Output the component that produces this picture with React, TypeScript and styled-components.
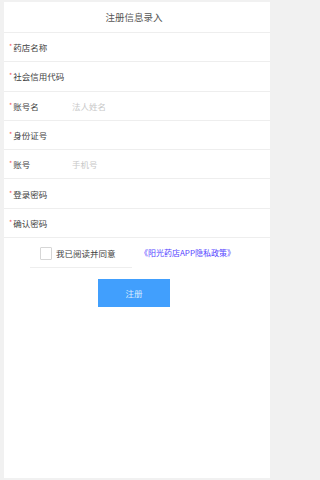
import React from "react";
import styled, { createGlobalStyle } from "styled-components";

const Global = createGlobalStyle`
  html, body { margin: 0; padding: 0; background: #f1f1f1; }
  body { font-family: "Noto Sans CJK SC", "Liberation Sans", sans-serif; }
  * { box-sizing: border-box; }
`;

const Panel = styled.div`
  margin: 2px 0 2px 4px;
  width: 266px;
  height: 476px;
  background: #ffffff;
  display: flex;
  flex-direction: column;
`;

const Header = styled.div`
  height: 31px;
  border-bottom: 1px solid #eeeeee;
  display: flex;
  align-items: center;
  justify-content: center;
  font-size: 9.5px;
  color: #555555;
  padding-right: 6px;
`;

const Row = styled.div`
  height: 29.3px;
  border-bottom: 1px solid #eeeeee;
  display: flex;
  align-items: center;
  padding-left: 5px;
`;

const Label = styled.div`
  width: 63px;
  display: flex;
  align-items: center;
  font-size: 8.5px;
  color: #3f3f3f;
`;

const Star = styled.span`
  color: #f25a5a;
  font-size: 7px;
  margin-right: 1px;
  position: relative;
  top: -1px;
`;

const Input = styled.input`
  flex: 1;
  min-width: 0;
  border: none;
  outline: none;
  padding: 0;
  background: transparent;
  font-family: inherit;
  font-size: 8.5px;
  color: #444;
  &::placeholder { color: #c8c8c8; }
`;

const AgreeRow = styled.div`
  display: flex;
  align-items: flex-start;
  padding-left: 26px;
`;

const AgreeBox = styled.label`
  width: 102px;
  height: 30px;
  border-bottom: 1px solid #eeeeee;
  display: flex;
  align-items: center;
  padding-left: 10px;
  padding-top: 1px;
  font-size: 8.5px;
  color: #3f3f3f;
`;

const Check = styled.span`
  width: 12px;
  height: 13px;
  border: 1px solid #d6d6d6;
  border-radius: 1px;
  margin-right: 4px;
  flex: none;
`;

const Policy = styled.a`
  margin-left: 8px;
  height: 28px;
  display: flex;
  align-items: center;
  font-size: 8px;
  color: #5544ff;
  text-decoration: none;
`;

const ButtonWrap = styled.div`
  padding-left: 94px;
  margin-top: 10px;
`;

const Submit = styled.button`
  width: 72px;
  height: 28px;
  border: none;
  background: #419ffd;
  color: rgba(255, 255, 255, 0.82);
  font-family: inherit;
  font-size: 8.5px;
  padding: 0;
`;

const fields: { label: string; placeholder?: string; type?: string }[] = [
  { label: "药店名称" },
  { label: "社会信用代码" },
  { label: "账号名", placeholder: "法人姓名" },
  { label: "身份证号" },
  { label: "账号", placeholder: "手机号" },
  { label: "登录密码", type: "password" },
  { label: "确认密码", type: "password" },
];

export default function App() {
  return (
    <>
      <Global />
      <Panel>
        <Header>注册信息录入</Header>
        {fields.map((f) => (
          <Row key={f.label}>
            <Label>
              <Star>*</Star>
              {f.label}
            </Label>
            <Input type={f.type || "text"} placeholder={f.placeholder || ""} />
          </Row>
        ))}
        <AgreeRow>
          <AgreeBox>
            <Check />
            我已阅读并同意
          </AgreeBox>
          <Policy href="#">《阳光药店APP隐私政策》</Policy>
        </AgreeRow>
        <ButtonWrap>
          <Submit>注册</Submit>
        </ButtonWrap>
      </Panel>
    </>
  );
}
